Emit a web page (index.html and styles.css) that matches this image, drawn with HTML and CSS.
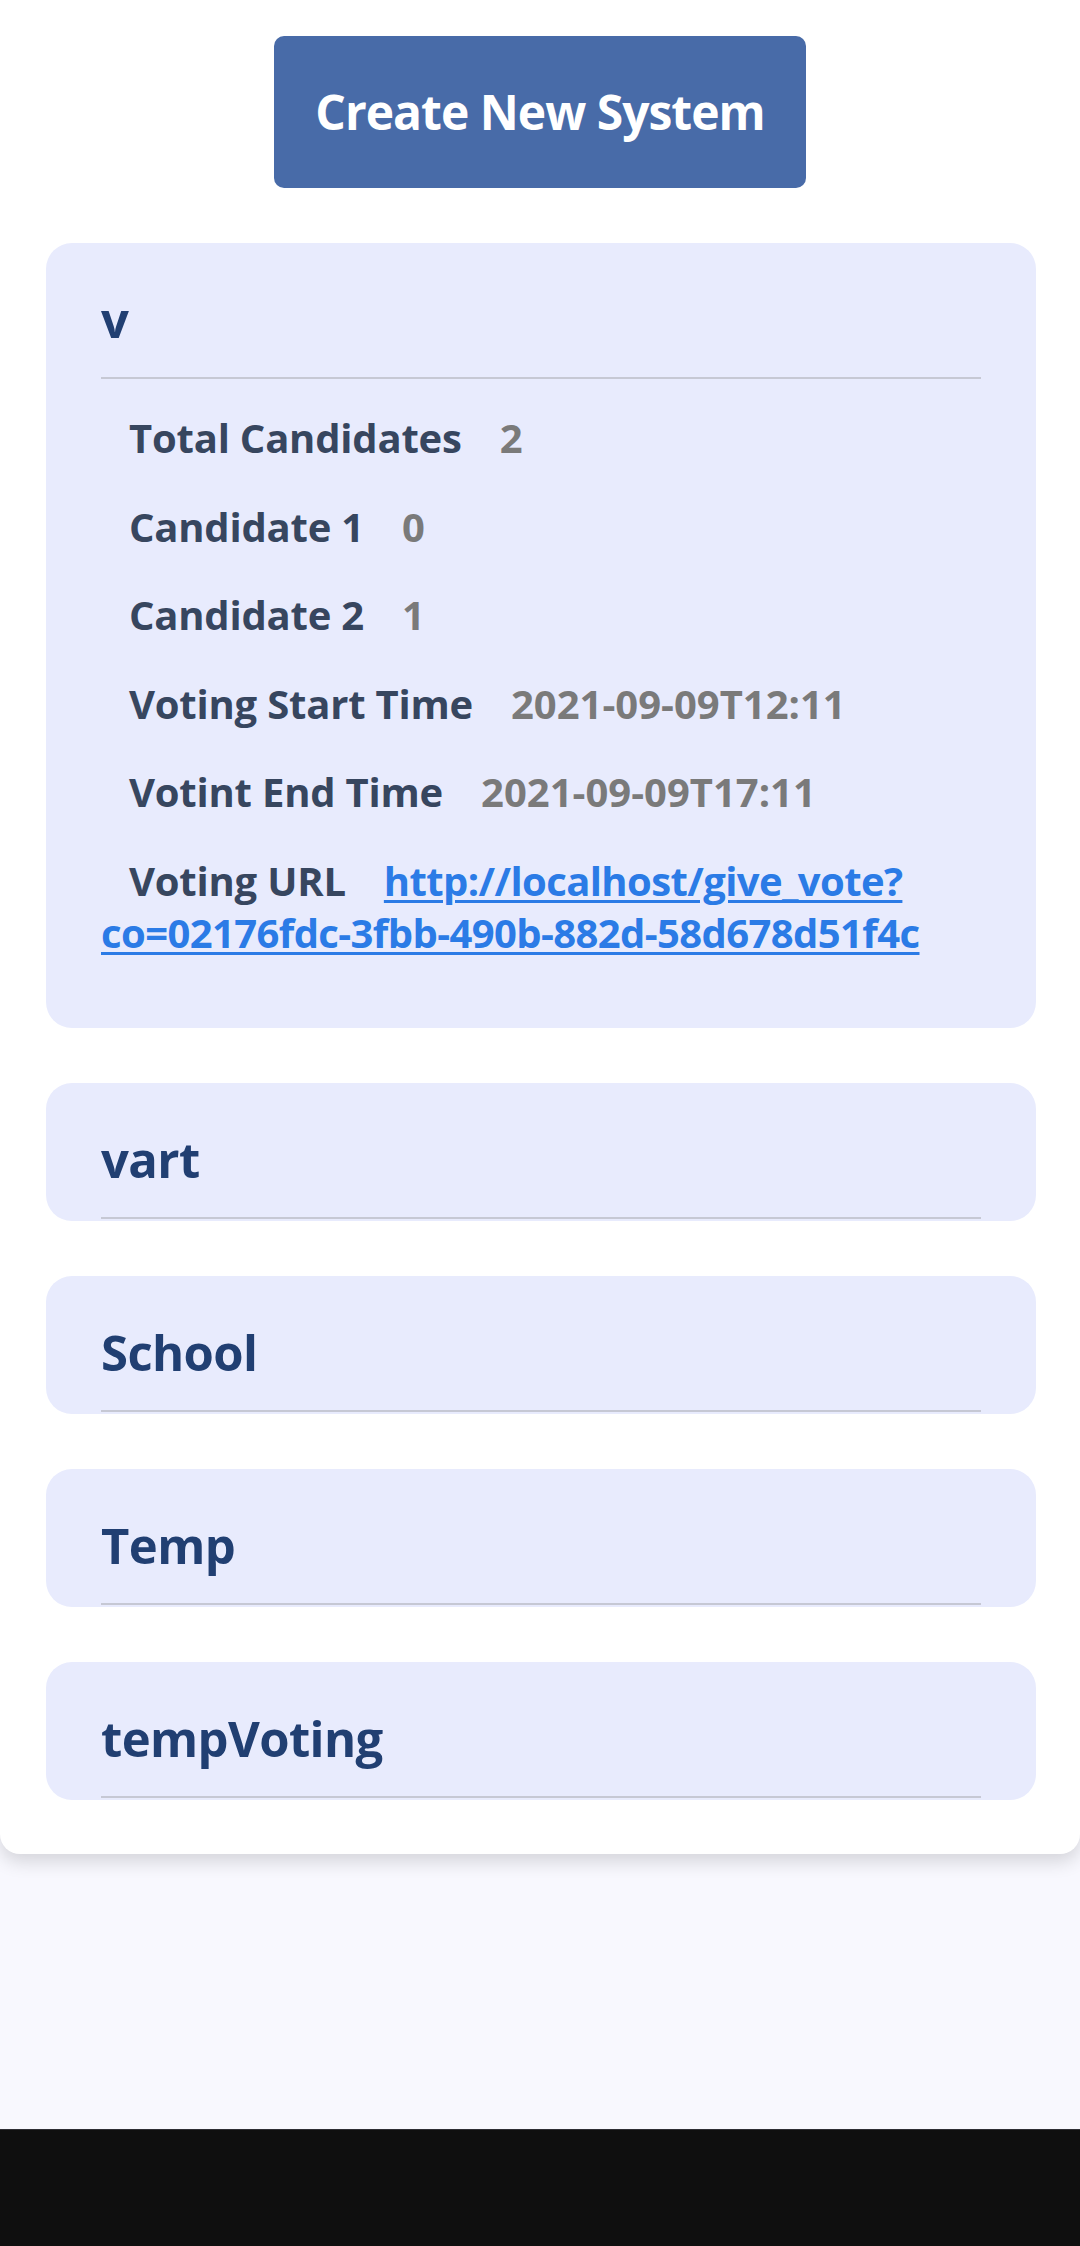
FILE: index.html
```html
<!DOCTYPE html>
<html lang="en">
<head>
<meta charset="utf-8">
<title>Voting Systems</title>
<link rel="stylesheet" href="styles.css">
</head>
<body>
<div class="page">
  <main class="panel">
    <div class="actions">
      <button class="create-btn" type="button">Create New System</button>
    </div>

    <section class="card">
      <div class="card-head"><h2 class="card-title">v</h2></div>
      <div class="card-body">
        <div class="row"><span class="label">Total Candidates</span><span class="value">2</span></div>
        <div class="row"><span class="label">Candidate 1</span><span class="value">0</span></div>
        <div class="row"><span class="label">Candidate 2</span><span class="value">1</span></div>
        <div class="row"><span class="label">Voting Start Time</span><span class="value">2021-09-09T12:11</span></div>
        <div class="row"><span class="label">Votint End Time</span><span class="value">2021-09-09T17:11</span></div>
        <div class="row"><span class="label">Voting URL</span><a class="link" href="#">http://localhost/give_vote?co=02176fdc-3fbb-490b-882d-58d678d51f4c</a></div>
      </div>
    </section>

    <section class="card">
      <div class="card-head"><h2 class="card-title">vart</h2></div>
    </section>

    <section class="card">
      <div class="card-head"><h2 class="card-title">School</h2></div>
    </section>

    <section class="card">
      <div class="card-head"><h2 class="card-title">Temp</h2></div>
    </section>

    <section class="card">
      <div class="card-head"><h2 class="card-title">tempVoting</h2></div>
    </section>
  </main>
  <div class="navbar"></div>
</div>
</body>
</html>
```
FILE: styles.css
```css
html, body {
  margin: 0;
  padding: 0;
}

body {
  background: #f8f8fe;
  font-family: "Open Sans", "Noto Sans", sans-serif;
}

.page {
  min-height: 2246px;
  display: flex;
  flex-direction: column;
}

.panel {
  background: #ffffff;
  border-radius: 0 0 20px 20px;
  box-shadow: 0 8px 18px rgba(0, 0, 0, 0.14);
  padding: 36px 44px 54px 46px;
  display: flex;
  flex-direction: column;
  gap: 55px;
}

.actions {
  display: flex;
  justify-content: center;
  margin-left: -2px;
}

.create-btn {
  height: 152px;
  padding: 0 41px;
  border: none;
  border-radius: 10px;
  background: #486ba8;
  color: #ffffff;
  font-family: "Open Sans", "Noto Sans", sans-serif;
  font-weight: 700;
  font-size: 48px;
  letter-spacing: -1px;
  line-height: 1;
  cursor: pointer;
}

.card {
  background: #e8ebfd;
  border-radius: 26px;
  padding: 0 55px 2px 55px;
}

.card-head {
  padding: 46px 0 28px 0;
  border-bottom: 2px solid #c6c8d4;
}

.card-title {
  margin: 0;
  font-family: "Open Sans", "Noto Sans", sans-serif;
  font-weight: 700;
  font-size: 49px;
  letter-spacing: -0.6px;
  line-height: 60px;
  color: #213f72;
}

.card-body {
  padding: 33px 0 67px 0;
  display: flex;
  flex-direction: column;
  gap: 36.6px;
}

.row {
  font-family: "Open Sans", "Noto Sans", sans-serif;
  font-weight: 700;
  font-size: 40px;
  line-height: 52px;
}

.label {
  margin-left: 28px;
  margin-right: 38px;
  color: #37465f;
  letter-spacing: -0.2px;
}

.value {
  color: #7a7a7a;
}

.link {
  color: #2b7be6;
  letter-spacing: -0.6px;
  text-decoration: underline;
  text-decoration-thickness: 3px;
  text-underline-offset: 4px;
}

.navbar {
  margin-top: auto;
  height: 116px;
  background: #0f0f0f;
  border-top: 1px solid #2e2e34;
}
```
